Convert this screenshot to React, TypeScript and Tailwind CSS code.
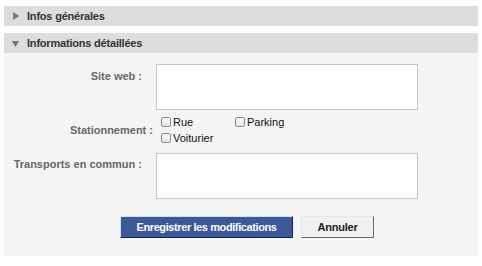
import React from 'react';

const font = "font-['Liberation_Sans',Arial,sans-serif]";

function SectionHeader({ title, open }: { title: string; open?: boolean }) {
  return (
    <div className="flex h-[20px] items-center bg-[#dddddd] pl-[8px]">
      <span className="flex w-[15px] items-center">
        {open ? (
          <svg width="7" height="7" viewBox="0 0 7 7">
            <path d="M0 1h7L3.5 7z" fill="#777" />
          </svg>
        ) : (
          <svg width="7" height="8" viewBox="0 0 7 8">
            <path d="M1 0v8l6-4z" fill="#777" />
          </svg>
        )}
      </span>
      <span className="text-[11px] font-bold tracking-[-0.2px] text-[#333]">{title}</span>
    </div>
  );
}

function Check({ label }: { label: string }) {
  return (
    <label className="flex h-[16px] items-center gap-[2px] text-[11px] text-[#111]">
      <input
        type="checkbox"
        className="h-[10px] w-[10px] appearance-none rounded-[2px] border border-[#8c8c8c] bg-gradient-to-b from-white to-[#e4e4e4]"
      />
      {label}
    </label>
  );
}

export default function App() {
  return (
    <div className={`${font} bg-white px-[4px] pt-[6px] pb-[10px]`}>
      <SectionHeader title="Infos générales" />
      <div className="mt-[7px]">
        <SectionHeader title="Informations détaillées" open />
      </div>
      <div className="bg-[#f5f5f5] pt-[11px] pb-[18px]">
        <div className="flex">
          <div className="w-[138px] pt-[4px] text-right text-[11px] font-bold text-[#666]">Site web :</div>
          <textarea className="ml-[14px] h-[46px] w-[262px] resize-none border border-[#bdc7d8] bg-white" />
        </div>

        <div className="mt-[4px] flex">
          <div className="flex w-[149px] items-center justify-end text-[11px] font-bold text-[#666]">Stationnement :</div>
          <div className="ml-[8px] grid grid-cols-[74px_auto]">
            <Check label="Rue" />
            <Check label="Parking" />
            <Check label="Voiturier" />
          </div>
        </div>

        <div className="mt-[7px] flex">
          <div className="w-[138px] pt-[3px] text-right text-[11px] font-bold whitespace-nowrap text-[#666]">Transports en commun :</div>
          <textarea className="ml-[14px] h-[46px] w-[262px] resize-none border border-[#bdc7d8] bg-white" />
        </div>

        <div className="mt-[17px] flex gap-[8px] pl-[116px]">
          <button className="h-[22px] w-[173px] whitespace-nowrap border border-t-[#d9dfea] border-l-[#d9dfea] border-r-[#0e1f5b] border-b-[#0e1f5b] bg-[#3b5998] text-[11px] font-bold tracking-[-0.4px] text-white">
            Enregistrer les modifications
          </button>
          <button className="h-[22px] w-[73px] border border-t-[#e7e7e7] border-l-[#e7e7e7] border-r-[#666] border-b-[#666] bg-[#f0f0f0] text-[11px] font-bold tracking-[-0.2px] text-[#222]">
            Annuler
          </button>
        </div>
      </div>
    </div>
  );
}
